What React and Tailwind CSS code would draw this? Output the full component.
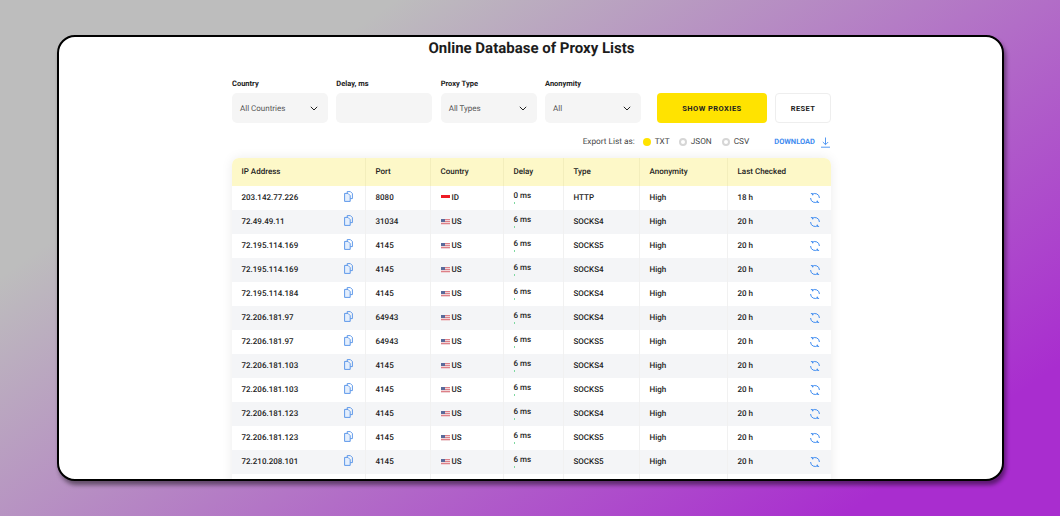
import React from "react";

const rows = [
  ["203.142.77.226", "8080", "ID", "0 ms", "HTTP", "18 h"],
  ["72.49.49.11", "31034", "US", "6 ms", "SOCKS4", "20 h"],
  ["72.195.114.169", "4145", "US", "6 ms", "SOCKS5", "20 h"],
  ["72.195.114.169", "4145", "US", "6 ms", "SOCKS4", "20 h"],
  ["72.195.114.184", "4145", "US", "6 ms", "SOCKS4", "20 h"],
  ["72.206.181.97", "64943", "US", "6 ms", "SOCKS4", "20 h"],
  ["72.206.181.97", "64943", "US", "6 ms", "SOCKS5", "20 h"],
  ["72.206.181.103", "4145", "US", "6 ms", "SOCKS4", "20 h"],
  ["72.206.181.103", "4145", "US", "6 ms", "SOCKS5", "20 h"],
  ["72.206.181.123", "4145", "US", "6 ms", "SOCKS4", "20 h"],
  ["72.206.181.123", "4145", "US", "6 ms", "SOCKS5", "20 h"],
  ["72.210.208.101", "4145", "US", "6 ms", "SOCKS5", "20 h"],
];

const cols = "grid grid-cols-[134px_65px_73px_60px_76px_88px_103px]";
const font = { fontFamily: "Roboto, sans-serif" };

function Chevron() {
  return (
    <svg width="8" height="5" viewBox="0 0 8 5" fill="none" stroke="#222" strokeWidth="1">
      <path d="M.8.8l3.2 3.2L7.2.8" />
    </svg>
  );
}

function Field({ label, value, select }) {
  return (
    <div className="flex w-[96px] flex-col">
      <div className="h-[15px] pt-[1px] text-[7.5px] leading-[10px] font-bold text-[#222]">{label}</div>
      <div className="flex h-[30px] items-center justify-between rounded-[5px] bg-[#f5f5f5] pr-[10px] pl-[8px] text-[8px] text-[#555]">
        <span className="pt-[1px]">{value}</span>
        {select && <Chevron />}
      </div>
    </div>
  );
}

function Copy() {
  return (
    <svg width="9" height="11" viewBox="0 0 9 11" fill="none" stroke="#4f8fe8" strokeWidth="0.9" strokeLinejoin="round">
      <path d="M3.2 2.2V.6h3.2l2 2v5H6.2" />
      <path d="M.6 2.4h3.4l2.2 2.2v5.8H.6z" fill="#e4eefc" />
    </svg>
  );
}

function Refresh() {
  return (
    <svg width="12" height="12" viewBox="0 0 12 12" fill="none" stroke="#3f8cf0" strokeWidth="1">
      <path d="M3 2.7A4.4 4.4 0 0 1 10.4 6" />
      <path d="M9 9.3A4.4 4.4 0 0 1 1.6 6" />
      <path d="M1.9 1.6h1.8v1.8" />
      <path d="M10.1 10.4H8.3V8.6" />
    </svg>
  );
}

function FlagUS() {
  return (
    <svg width="9" height="6" viewBox="0 0 9 6">
      <rect width="9" height="6" fill="#f0d5d8" />
      <rect y="0" width="9" height="1" fill="#dd8088" />
      <rect y="2" width="9" height="1" fill="#dd8088" />
      <rect y="4" width="9" height="1" fill="#dd8088" />
      <rect width="4" height="3" fill="#5a6a9a" />
    </svg>
  );
}

function FlagID() {
  return (
    <svg width="9" height="6" viewBox="0 0 9 6">
      <rect width="9" height="3" fill="#ee1c25" />
      <rect y="3" width="9" height="3" fill="#ffffff" />
    </svg>
  );
}

function Radio({ label, active }) {
  return (
    <div className="flex items-center gap-[4px]">
      {active ? (
        <span className="h-[8px] w-[8px] rounded-full bg-[#ffe300]" />
      ) : (
        <span className="h-[8px] w-[8px] rounded-full border-2 border-[#d6d6d6] bg-white" />
      )}
      <span>{label}</span>
    </div>
  );
}

const cellB = "flex items-center border-r border-[#f1f1f1]";

export default function App() {
  return (
    <div
      className="h-screen w-full overflow-hidden bg-[linear-gradient(145deg,#bdbdbd_22%,#a92dcf_88%)] pt-[35px] pl-[57px] [text-rendering:geometricPrecision]"
      style={font}
    >
      <div className="h-[446px] w-[947px] overflow-hidden rounded-[18px] border-2 border-black bg-white shadow-[2px_4px_4px_rgba(0,0,0,0.45)]">
        <h1 className="mt-[2px] pl-[2px] text-center text-[15px] leading-[18px] font-bold text-[#1c1c1c]">
          Online Database of Proxy Lists
        </h1>
        <div className="mt-[21px] ml-[173px] w-[599px]">
          <div className="flex items-end gap-[8.33px]">
            <Field label="Country" value="All Countries" select />
            <Field label="Delay, ms" value="" />
            <Field label="Proxy Type" value="All Types" select />
            <Field label="Anonymity" value="All" select />
            <button className="ml-[7.67px] h-[30px] w-[110px] rounded-[4px] bg-[#ffe300] pt-[1px] text-[7.5px] font-bold tracking-[0.45px] text-[#222]">
              SHOW PROXIES
            </button>
            <button className="-ml-[0.33px] h-[30px] w-[56px] rounded-[4px] border border-[#eeeeee] bg-white pt-[1px] text-[7.5px] font-bold tracking-[0.4px] text-[#222]">
              RESET
            </button>
          </div>
          <div className="mt-[12px] flex h-[13px] items-center justify-end pt-[1px] pr-[1px] text-[8.25px] text-[#444]">
            <span className="mr-[8px]">Export List as:</span>
            <div className="mr-[9px]"><Radio label="TXT" active /></div>
            <div className="mr-[10px]"><Radio label="JSON" /></div>
            <Radio label="CSV" />
            <span className="mr-[6px] ml-[25px] text-[7.5px] font-bold text-[#3f8cf0]">DOWNLOAD</span>
            <svg width="9" height="11" viewBox="0 0 9 11" fill="none" stroke="#3f8cf0" strokeWidth="0.9">
              <path d="M4.5 0.5v7M1.8 5l2.7 2.7L7.2 5M0 10.2h9" />
            </svg>
          </div>
          <div className="mt-[10px] rounded-t-[7px] shadow-[0_0_12px_rgba(0,0,0,0.08)]">
            <div className={`${cols} h-[28px] rounded-t-[7px] bg-[#fdf8c8] text-[8px] font-medium text-[#222]`}>
              {["IP Address", "Port", "Country", "Delay", "Type", "Anonymity", "Last Checked"].map((h, i) => (
                <div
                  key={h}
                  className={`flex items-center ${i === 6 ? "" : "border-r border-[#f3eebc]"} pl-[9.5px]`}
                >
                  {h}
                </div>
              ))}
            </div>
            {rows.map((r, i) => (
              <div
                key={i}
                className={`${cols} h-[24px] text-[8px] font-medium text-[#222] ${i % 2 ? "bg-[#f4f5f7]" : "bg-white"}`}
              >
                <div className={`${cellB} justify-between pr-[12px] pl-[9.5px]`}>
                  <span>{r[0]}</span>
                  <span className="-mt-[4px]"><Copy /></span>
                </div>
                <div className={`${cellB} pl-[9.5px]`}>{r[1]}</div>
                <div className={`${cellB} gap-[2px] pl-[9.5px]`}>
                  {r[2] === "ID" ? <FlagID /> : <FlagUS />}
                  <span>{r[2]}</span>
                </div>
                <div className={`${cellB} pl-[9.5px]`}>
                  <div className="-mt-[1px] flex flex-col">
                    <span className="leading-[10px]">{r[3]}</span>
                    <span className="mt-[1px] h-[2px] w-[1px] bg-[#7fd8a0]" />
                  </div>
                </div>
                <div className={`${cellB} pl-[9.5px]`}>{r[4]}</div>
                <div className={`${cellB} pl-[9.5px]`}>High</div>
                <div className="flex items-center justify-between pr-[10px] pl-[9.5px]">
                  <span>{r[5]}</span>
                  <Refresh />
                </div>
              </div>
            ))}
            <div className={`${cols} h-[24px] bg-white`}>
              <div className={`${cellB} items-start justify-end pt-[5px] pr-[12px]`}><Copy /></div>
              <div className={cellB} />
              <div className={cellB} />
              <div className={cellB} />
              <div className={cellB} />
              <div className={cellB} />
              <div />
            </div>
          </div>
        </div>
      </div>
    </div>
  );
}
